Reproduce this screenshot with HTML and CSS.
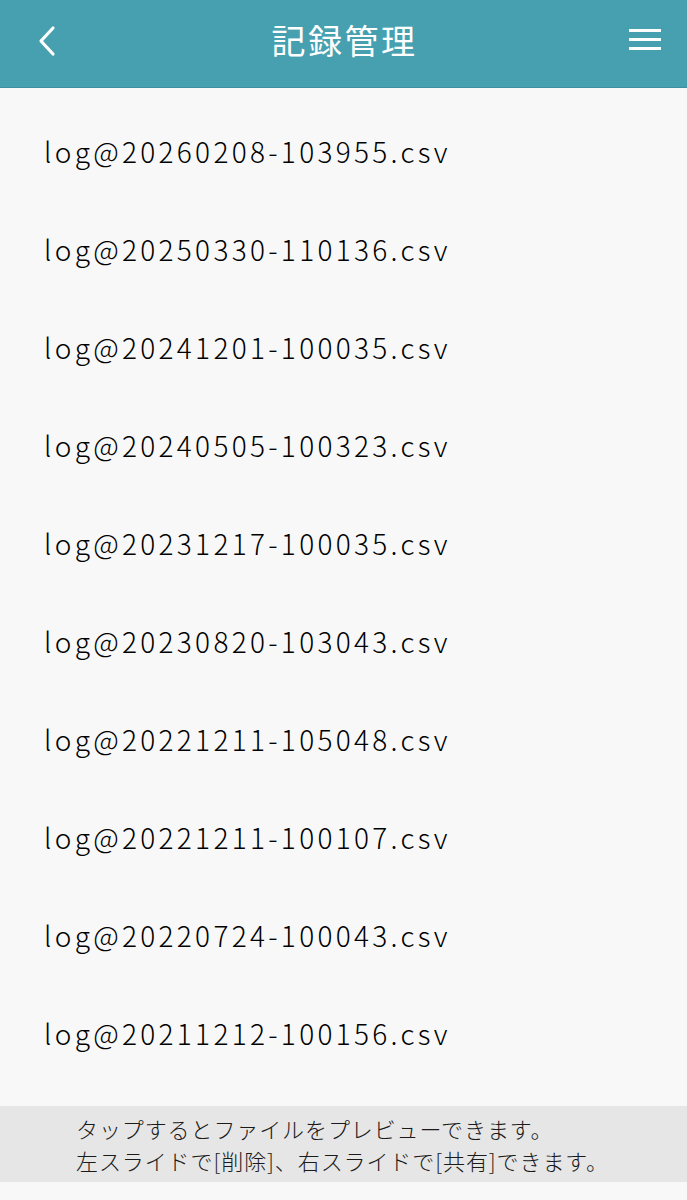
FILE: index.html
```html
<!DOCTYPE html>
<html lang="ja">
<head>
<meta charset="utf-8">
<link rel="stylesheet" href="styles.css">
</head>
<body>
<div class="app">
  <header class="header">
    <button class="icon-btn back" aria-label="戻る">
      <svg width="24" height="32" viewBox="0 0 24 32"><path d="M17 3 L5 16 L17 29" fill="none" stroke="#fff" stroke-width="3.2" stroke-linecap="round" stroke-linejoin="round"/></svg>
    </button>
    <h1 class="title">記録管理</h1>
    <button class="icon-btn menu" aria-label="メニュー">
      <svg width="32" height="22" viewBox="0 0 32 22"><rect x="0" y="1" width="32" height="3" fill="#fff"/><rect x="0" y="10" width="32" height="3" fill="#fff"/><rect x="0" y="19" width="32" height="3" fill="#fff"/></svg>
    </button>
  </header>
  <ul class="list">
    <li class="item">log@20260208-103955.csv</li>
    <li class="item">log@20250330-110136.csv</li>
    <li class="item">log@20241201-100035.csv</li>
    <li class="item">log@20240505-100323.csv</li>
    <li class="item">log@20231217-100035.csv</li>
    <li class="item">log@20230820-103043.csv</li>
    <li class="item">log@20221211-105048.csv</li>
    <li class="item">log@20221211-100107.csv</li>
    <li class="item">log@20220724-100043.csv</li>
    <li class="item">log@20211212-100156.csv</li>
  </ul>
  <footer class="hint">
    <p>タップするとファイルをプレビューできます。</p>
    <p>左スライドで[削除]、右スライドで[共有]できます。</p>
  </footer>
</div>
</body>
</html>
```
FILE: styles.css
```css
* { box-sizing: border-box; }
html, body { margin: 0; padding: 0; }
body {
  background: #f8f8f8;
  font-family: "Noto Sans CJK JP", "Noto Sans", sans-serif;
  color: #111;
}
.app { width: 687px; height: 1200px; display: flex; flex-direction: column; }
.header {
  height: 88px;
  background: #47a0b0;
  border-bottom: 1px solid #3d8f9e;
  display: flex;
  align-items: center;
  justify-content: space-between;
  padding: 0 26px 0 36px;
  flex-shrink: 0;
}
.icon-btn {
  background: none; border: 0; padding: 0; margin: 0;
  display: flex; align-items: center; justify-content: center;
}
.back { margin-top: -6px; }
.menu { margin-top: -10px; }
.title {
  margin: 0 0 8px 0;
  font-weight: 400;
  font-size: 34px;
  letter-spacing: 2.5px;
  color: #fff;
}
.list { list-style: none; margin: 0; padding: 14px 0 0 0; }
.item {
  height: 98px;
  display: flex;
  align-items: center;
  padding-left: 44px;
  font-size: 28px;
  font-weight: 300;
  letter-spacing: 3.3px;
  color: #000;
}
.hint {
  margin-top: auto;
  margin-bottom: 18px;
  height: 76px;
  background: #e6e6e6;
  padding: 6px 0 0 76px;
  font-size: 22px;
  font-weight: 300;
  letter-spacing: 0.9px;
  line-height: 32px;
  color: #1a1a1a;
}
.hint p { margin: 0; }
```
